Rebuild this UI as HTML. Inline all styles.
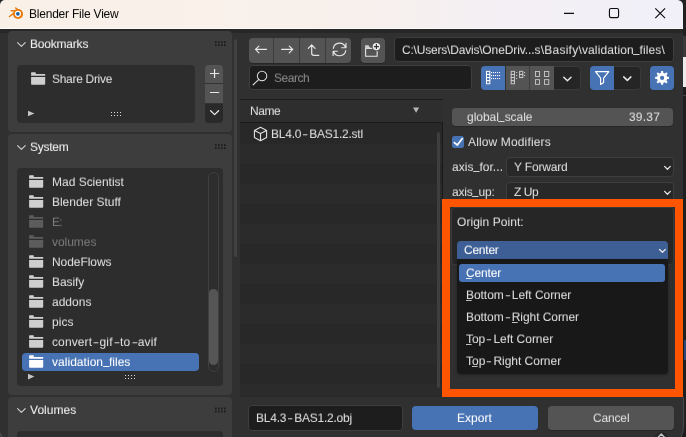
<!DOCTYPE html>
<html>
<head>
<meta charset="utf-8">
<title>Blender File View</title>
<style>
html,body{margin:0;padding:0;}
body{width:686px;height:437px;overflow:hidden;position:relative;background:#212121;font-family:"Liberation Sans",sans-serif;font-size:12px;color:#dfdfdf;}
.abs,.t,.box,.btn,.fld,.panel{position:absolute;}
.t{white-space:nowrap;line-height:14px;height:14px;}
#win{position:absolute;left:0;top:0;width:683px;height:437px;background:#303030;border-radius:5px 5.5px 0 0;overflow:hidden;}
#title{position:absolute;left:0;top:0;width:683px;height:28.8px;background:linear-gradient(90deg,#f9f1e8 0%,#f8f0ea 45%,#f3eff4 75%,#f1f0f8 100%);box-shadow:inset 0 -1px 0 rgba(255,255,255,0.65);}
#tshadow{position:absolute;left:0;top:28.8px;width:683px;height:3.8px;background:#272727;}
.panel{background:#3d3d3d;border-radius:4px;}
.box{background:#2d2d2d;border-radius:4px;}
.btn{background:#545454;border-radius:4px;box-shadow:0 1px 0 rgba(0,0,0,0.18);}
.fld{background:#1d1d1d;border-radius:4px;box-shadow:inset 0 0 0 1px #3e3e3e;}
.hy{display:inline-block;margin:0 2.1px;transform:scaleX(1.45);}
.t{transform:scaleY(0.94);transform-origin:0 11.2px;will-change:transform;-webkit-text-stroke:0.05px currentColor;}
u{text-decoration:none;background:linear-gradient(currentColor,currentColor) 0 calc(100% - 0.9px)/5.7px 0.9px no-repeat;}
.us{display:inline-block;position:relative;top:-2px;transform:scaleX(0.84);margin:0 -0.45px;-webkit-text-stroke:0.35px currentColor;}
.hd{color:#f0f0f0;}
.dis{color:#7a7a7a;}
svg{position:absolute;overflow:visible;}
</style>
</head>
<body>
<div id="win">
  <div id="title"></div>
  <div id="tshadow"></div>
  <!-- title text -->
  <span class="t" id="ttl" style="-webkit-text-stroke:0;color:#000;transform:scaleY(0.985);left:29.4px;top:6.5px;font-size:12px;letter-spacing:-0.216px;">Blender File View</span>

  <!-- sidebar panels -->
  <div class="panel" style="left:8px;top:31px;width:224px;height:101px;"></div>
  <div class="panel" style="left:8px;top:134px;width:224px;height:261px;"></div>
  <div class="panel" style="left:8px;top:397.3px;width:224px;height:60px;"></div>

  <span class="t hd" style="left:30.2px;top:37px;letter-spacing:-0.203px;">Bookmarks</span>
  <span class="t hd" style="left:30.1px;top:139.8px;letter-spacing:-0.253px;">System</span>
  <span class="t hd" style="left:30.2px;top:402.6px;letter-spacing:0.038px;">Volumes</span>

  <!-- bookmarks list -->
  <div class="box" style="left:17px;top:65px;width:178px;height:58px;"></div>
  <span class="t" style="left:52.1px;top:72px;letter-spacing:-0.305px;">Share Drive</span>
  <div class="btn" style="left:205px;top:65px;width:18px;height:18px;border-radius:4px 4px 0 0;"></div>
  <div class="btn" style="left:205px;top:84px;width:18px;height:19px;border-radius:0 0 0 0;"></div>
  <div class="abs" style="left:205px;top:104px;width:18px;height:19px;background:#292929;border-radius:0 0 4px 4px;"></div>

  <!-- system list -->
  <div class="box" style="left:17px;top:168px;width:206px;height:218px;"></div>
  <div class="abs" style="left:22px;top:353px;width:177px;height:18px;background:#4772b3;border-radius:4px;"></div>
  <span class="t" style="left:52.0px;top:175px;letter-spacing:-0.010px;">Mad Scientist</span>
  <span class="t" style="left:52.0px;top:195px;letter-spacing:-0.029px;">Blender Stuff</span>
  <span class="t dis" style="left:52.0px;top:215px;letter-spacing:-0.872px;">E:</span>
  <span class="t dis" style="left:52.0px;top:235px;letter-spacing:-0.041px;">volumes</span>
  <span class="t" style="left:52.0px;top:255px;letter-spacing:-0.059px;">NodeFlows</span>
  <span class="t" style="left:52.0px;top:275px;letter-spacing:-0.098px;">Basify</span>
  <span class="t" style="left:52.0px;top:295px;letter-spacing:0.004px;">addons</span>
  <span class="t" style="left:52.0px;top:315px;letter-spacing:0.039px;">pics</span>
  <span class="t" style="left:52.0px;top:335px;letter-spacing:0.107px;">convert<span class="hy" style="margin:0 1.2px 0 2.2px;transform:scaleX(1.6)">-</span>gif<span class="hy" style="margin:0 1.2px 0 2.2px;transform:scaleX(1.6)">-</span>to<span class="hy" style="margin:0 1.2px 0 2.2px;transform:scaleX(1.6)">-</span>avif</span>
  <span class="t" style="left:52.0px;top:355px;color:#fff;letter-spacing:0.034px;">validation<span class="us">_</span>files</span>
  <!-- scrollbar -->
  <div class="abs" style="left:207.6px;top:172px;width:9px;height:198px;border:1px solid #404040;border-radius:5.5px;background:#2d2d2d;"></div>
  <div class="abs" style="left:208.6px;top:288.5px;width:9.4px;height:76.5px;border-radius:4.7px;background:#555;"></div>
  <div class="box" style="left:17px;top:431px;width:206px;height:20px;"></div>

  <!-- region scrollbar -->
  <div class="abs" style="left:234.3px;top:38.5px;width:2.5px;height:218px;background:#414141;border-radius:1.5px;"></div>

  <!-- toolbar -->
  <div class="btn" style="left:248.7px;top:38px;width:102.4px;height:24.8px;"></div>
  <div class="abs" style="left:273px;top:38px;width:1.1px;height:24.8px;background:#3d3d3d;"></div>
  <div class="abs" style="left:299px;top:38px;width:1.1px;height:24.8px;background:#3d3d3d;"></div>
  <div class="abs" style="left:325.2px;top:38px;width:1.1px;height:24.8px;background:#3d3d3d;"></div>
  <div class="btn" style="left:360.8px;top:38px;width:24.6px;height:24.8px;"></div>
  <div class="fld" style="left:393.7px;top:37.4px;width:280.8px;height:24.7px;"></div>
  <span class="t" style="left:401.8px;top:43px;letter-spacing:0.012px;"><span style="letter-spacing:-0.2px">C:\Users\Davis\</span><span style="letter-spacing:-0.1px">OneDriv...</span><span style="letter-spacing:0.24px">s\Basify\</span><span style="letter-spacing:0.1px">validation<span class="us">_</span>files\</span></span>

  <div class="fld" style="left:248.7px;top:65.4px;width:223.2px;height:24.8px;"></div>
  <span class="t" style="left:273.9px;top:71px;color:#8a8a8a;letter-spacing:-0.455px;">Search</span>

  <div class="abs" style="left:480.8px;top:66px;width:24.4px;height:24px;background:#4772b3;border-radius:4px 0 0 4px;"></div>
  <div class="abs" style="left:505.9px;top:66px;width:48.3px;height:24px;background:#545454;"></div>
  <div class="abs" style="left:529.3px;top:66px;width:0.9px;height:24px;background:#3d3d3d;"></div>
  <div class="abs" style="left:554.2px;top:65.6px;width:25.5px;height:22.6px;background:#252525;border-radius:0 4.5px 4.5px 0;border:1px solid #393939;border-left:none;"></div>
  <div class="abs" style="left:590px;top:66px;width:24px;height:24px;background:#4772b3;border-radius:4px 0 0 4px;"></div>
  <div class="abs" style="left:614.2px;top:65.6px;width:25.8px;height:22.6px;background:#252525;border-radius:0 4.5px 4.5px 0;border:1px solid #393939;border-left:none;"></div>
  <div class="abs" style="left:650px;top:66px;width:24px;height:24px;background:#4772b3;border-radius:4px;"></div>

  <!-- file list -->
  <div class="abs" style="left:240px;top:98.5px;width:203px;height:298px;background:#282828;"></div>
  <div class="abs" style="left:240px;top:98.5px;width:203px;height:1px;background:#1c1c1c;"></div>
  <div class="abs" style="left:240px;top:99.5px;width:203px;height:22.5px;background:#2e2e2e;"></div>
  <div class="abs" style="left:240px;top:143.8px;width:203px;height:252.7px;background:repeating-linear-gradient(180deg,#2b2b2b 0,#2b2b2b 20px,#282828 20px,#282828 40px);"></div>
  <div class="abs" style="left:240px;top:121.7px;width:203px;height:1px;background:#191919;"></div>
  <div class="abs" style="left:442.2px;top:122px;width:1px;height:274.5px;background:#191919;"></div>
  <span class="t" style="left:249.8px;top:104px;letter-spacing:-0.429px;">Name</span>
  <span class="t" style="left:271.2px;top:127px;letter-spacing:-0.236px;">BL4.0<span class="hy">-</span>BAS1.2.stl</span>
  <div class="abs" style="left:437.3px;top:131.5px;width:2.5px;height:256px;background:#3e3e3e;border-radius:1.5px;"></div>

  <!-- bottom -->
  <div class="fld" style="left:248px;top:404.9px;width:155px;height:25.7px;"></div>
  <span class="t" style="left:255.9px;top:411px;letter-spacing:-0.237px;">BL4.3<span class="hy">-</span>BAS1.2.obj</span>
  <div class="abs" style="left:412px;top:406px;width:126px;height:24px;background:#4772b3;border-radius:4px;"></div>
  <span class="t" style="left:456.8px;top:411px;color:#fff;letter-spacing:0.052px;">Export</span>
  <div class="btn" style="left:548px;top:406px;width:126.2px;height:24.2px;"></div>
  <span class="t" style="left:593.1px;top:411px;letter-spacing:-0.160px;">Cancel</span>

  <!-- options -->
  <div class="btn" style="left:451.6px;top:107.8px;width:221.8px;height:18.5px;"></div>
  <span class="t" style="left:466.7px;top:110px;letter-spacing:-0.030px;">global<span class="us">_</span>scale</span>
  <span class="t" style="left:628.8px;top:110px;letter-spacing:0.194px;">39.37</span>
  <div class="abs" style="left:452px;top:136px;width:12px;height:12px;background:#4772b3;border-radius:2.5px;"></div>
  <span class="t" style="left:468.0px;top:135px;letter-spacing:0.140px;">Allow Modifiers</span>
  <span class="t" style="left:451.7px;top:160px;letter-spacing:0.045px;">axis<span class="us">_</span>for...</span>
  <div class="fld" style="left:505.6px;top:156.8px;width:168.3px;height:20.4px;background:#282828;"></div>
  <span class="t" style="left:514.1px;top:160px;letter-spacing:-0.182px;">Y Forward</span>
  <span class="t" style="left:451.7px;top:185px;letter-spacing:-0.155px;">axis<span class="us">_</span>up:</span>
  <div class="fld" style="left:505.6px;top:181.9px;width:168.3px;height:20.4px;background:#282828;"></div>
  <span class="t" style="left:514.1px;top:185px;letter-spacing:-0.429px;">Z Up</span>

  <!-- orange highlight -->
  <div class="abs" style="left:450.5px;top:207px;width:224.5px;height:182px;background:#303030;"></div>
  <div class="abs" style="left:450.5px;top:207.2px;width:223.3px;height:57.4px;background:#262626;border-radius:4px;box-shadow:inset 0 0 0 1px #3a3a3a;"></div>
  <span class="t" style="left:456.8px;top:215px;letter-spacing:0.051px;">Origin Point:</span>
  <div class="abs" style="left:457px;top:241px;width:211px;height:18.3px;background:#3d5f95;border-radius:4px 4px 0 0;"></div>
  <span class="t" style="left:464.1px;top:243px;color:#fff;letter-spacing:-0.239px;">Center</span>
  <div class="abs" style="left:456.6px;top:259.3px;width:211.4px;height:115px;background:#181818;border-radius:0 0 4px 4px;box-shadow:0 1px 3px rgba(0,0,0,0.35);"></div>
  <div class="abs" style="left:459px;top:264px;width:206px;height:18px;background:#4772b3;border-radius:3px;"></div>
  <span class="t" style="left:465.9px;top:266px;color:#fff;letter-spacing:-0.172px;"><u>C</u>enter</span>
  <span class="t" style="left:465.9px;top:288px;letter-spacing:-0.053px;"><u>B</u>ottom<span class="hy">-</span>Left Corner</span>
  <span class="t" style="left:465.9px;top:310px;letter-spacing:-0.066px;">Bottom<span class="hy">-</span><u>R</u>ight Corner</span>
  <span class="t" style="left:465.9px;top:332px;letter-spacing:-0.032px;"><u>T</u>op<span class="hy">-</span>Left Corner</span>
  <span class="t" style="left:465.9px;top:354px;letter-spacing:-0.031px;">T<u>o</u>p<span class="hy">-</span>Right Corner</span>
  <div class="abs" style="left:442.3px;top:199px;width:224.5px;height:182px;border:8px solid #ff5500;width:224.5px;"></div>
<svg id="icons" width="686" height="437" viewBox="0 0 686 437" style="left:0;top:0;pointer-events:none;"><path fill="#cfcfcf" d="M29.1 175.65q0-.4 .4-.4h3.9q.4 0 .4 .4v1.25h9q.4 0 .4 .4v1.5h-14.1z"/><path fill="#cfcfcf" d="M29.1 179.90h14.1v7.1q0 .8-.8 .8h-12.5q-.8 0-.8-.8z"/>
<path fill="#cfcfcf" d="M29.1 195.65q0-.4 .4-.4h3.9q.4 0 .4 .4v1.25h9q.4 0 .4 .4v1.5h-14.1z"/><path fill="#cfcfcf" d="M29.1 199.90h14.1v7.1q0 .8-.8 .8h-12.5q-.8 0-.8-.8z"/>
<path fill="#5c5c5c" d="M29.1 215.65q0-.4 .4-.4h3.9q.4 0 .4 .4v1.25h9q.4 0 .4 .4v1.5h-14.1z"/><path fill="#5c5c5c" d="M29.1 219.90h14.1v7.1q0 .8-.8 .8h-12.5q-.8 0-.8-.8z"/>
<path fill="#5c5c5c" d="M29.1 235.65q0-.4 .4-.4h3.9q.4 0 .4 .4v1.25h9q.4 0 .4 .4v1.5h-14.1z"/><path fill="#5c5c5c" d="M29.1 239.90h14.1v7.1q0 .8-.8 .8h-12.5q-.8 0-.8-.8z"/>
<path fill="#cfcfcf" d="M29.1 255.65q0-.4 .4-.4h3.9q.4 0 .4 .4v1.25h9q.4 0 .4 .4v1.5h-14.1z"/><path fill="#cfcfcf" d="M29.1 259.90h14.1v7.1q0 .8-.8 .8h-12.5q-.8 0-.8-.8z"/>
<path fill="#cfcfcf" d="M29.1 275.65q0-.4 .4-.4h3.9q.4 0 .4 .4v1.25h9q.4 0 .4 .4v1.5h-14.1z"/><path fill="#cfcfcf" d="M29.1 279.90h14.1v7.1q0 .8-.8 .8h-12.5q-.8 0-.8-.8z"/>
<path fill="#cfcfcf" d="M29.1 295.65q0-.4 .4-.4h3.9q.4 0 .4 .4v1.25h9q.4 0 .4 .4v1.5h-14.1z"/><path fill="#cfcfcf" d="M29.1 299.90h14.1v7.1q0 .8-.8 .8h-12.5q-.8 0-.8-.8z"/>
<path fill="#cfcfcf" d="M29.1 315.65q0-.4 .4-.4h3.9q.4 0 .4 .4v1.25h9q.4 0 .4 .4v1.5h-14.1z"/><path fill="#cfcfcf" d="M29.1 319.90h14.1v7.1q0 .8-.8 .8h-12.5q-.8 0-.8-.8z"/>
<path fill="#cfcfcf" d="M29.1 335.65q0-.4 .4-.4h3.9q.4 0 .4 .4v1.25h9q.4 0 .4 .4v1.5h-14.1z"/><path fill="#cfcfcf" d="M29.1 339.90h14.1v7.1q0 .8-.8 .8h-12.5q-.8 0-.8-.8z"/>
<path fill="#ffffff" d="M29.1 355.65q0-.4 .4-.4h3.9q.4 0 .4 .4v1.25h9q.4 0 .4 .4v1.5h-14.1z"/><path fill="#ffffff" d="M29.1 359.90h14.1v7.1q0 .8-.8 .8h-12.5q-.8 0-.8-.8z"/>
<path fill="#cfcfcf" d="M31.1 72.65q0-.4 .4-.4h3.9q.4 0 .4 .4v1.25h9q.4 0 .4 .4v1.5h-14.1z"/><path fill="#cfcfcf" d="M31.1 76.90h14.1v7.1q0 .8-.8 .8h-12.5q-.8 0-.8-.8z"/>
<path fill="none" stroke="#d4d4d4" stroke-width="1.1" stroke-linecap="round" stroke-linejoin="round" d="M17.6 42.60L21.4 46.30L25.2 42.60"/>
<path fill="none" stroke="#d4d4d4" stroke-width="1.1" stroke-linecap="round" stroke-linejoin="round" d="M17.6 145.60L21.4 149.30L25.2 145.60"/>
<path fill="none" stroke="#d4d4d4" stroke-width="1.1" stroke-linecap="round" stroke-linejoin="round" d="M17.6 408.60L21.4 412.30L25.2 408.60"/>
<rect x="215.0" y="41.2" width="1.6" height="1.8" fill="#1b1b1b"/><rect x="218.0" y="41.2" width="1.6" height="1.8" fill="#1b1b1b"/><rect x="221.0" y="41.2" width="1.6" height="1.8" fill="#1b1b1b"/><rect x="224.0" y="41.2" width="1.6" height="1.8" fill="#1b1b1b"/><rect x="215.0" y="44.2" width="1.6" height="1.8" fill="#1b1b1b"/><rect x="218.0" y="44.2" width="1.6" height="1.8" fill="#1b1b1b"/><rect x="221.0" y="44.2" width="1.6" height="1.8" fill="#1b1b1b"/><rect x="224.0" y="44.2" width="1.6" height="1.8" fill="#1b1b1b"/>
<rect x="215.0" y="144.2" width="1.6" height="1.8" fill="#1b1b1b"/><rect x="218.0" y="144.2" width="1.6" height="1.8" fill="#1b1b1b"/><rect x="221.0" y="144.2" width="1.6" height="1.8" fill="#1b1b1b"/><rect x="224.0" y="144.2" width="1.6" height="1.8" fill="#1b1b1b"/><rect x="215.0" y="147.2" width="1.6" height="1.8" fill="#1b1b1b"/><rect x="218.0" y="147.2" width="1.6" height="1.8" fill="#1b1b1b"/><rect x="221.0" y="147.2" width="1.6" height="1.8" fill="#1b1b1b"/><rect x="224.0" y="147.2" width="1.6" height="1.8" fill="#1b1b1b"/>
<rect x="215.0" y="407.6" width="1.6" height="1.8" fill="#1b1b1b"/><rect x="218.0" y="407.6" width="1.6" height="1.8" fill="#1b1b1b"/><rect x="221.0" y="407.6" width="1.6" height="1.8" fill="#1b1b1b"/><rect x="224.0" y="407.6" width="1.6" height="1.8" fill="#1b1b1b"/><rect x="215.0" y="410.6" width="1.6" height="1.8" fill="#1b1b1b"/><rect x="218.0" y="410.6" width="1.6" height="1.8" fill="#1b1b1b"/><rect x="221.0" y="410.6" width="1.6" height="1.8" fill="#1b1b1b"/><rect x="224.0" y="410.6" width="1.6" height="1.8" fill="#1b1b1b"/>
<path fill="#c4c4c4" d="M28 110.7L34.4 113.5L28 116.3z"/>
<rect x="111.00" y="112.00" width="1.0" height="1.0" fill="#dedede"/><rect x="114.00" y="112.00" width="1.0" height="1.0" fill="#dedede"/><rect x="117.00" y="112.00" width="1.0" height="1.0" fill="#dedede"/><rect x="120.00" y="112.00" width="1.0" height="1.0" fill="#dedede"/><rect x="111.00" y="115.00" width="1.0" height="1.0" fill="#dedede"/><rect x="114.00" y="115.00" width="1.0" height="1.0" fill="#dedede"/><rect x="117.00" y="115.00" width="1.0" height="1.0" fill="#dedede"/><rect x="120.00" y="115.00" width="1.0" height="1.0" fill="#dedede"/>
<path fill="#c4c4c4" d="M28 373.8L34.4 376.6L28 379.4z"/>
<rect x="125.00" y="375.00" width="1.0" height="1.0" fill="#dedede"/><rect x="128.00" y="375.00" width="1.0" height="1.0" fill="#dedede"/><rect x="131.00" y="375.00" width="1.0" height="1.0" fill="#dedede"/><rect x="134.00" y="375.00" width="1.0" height="1.0" fill="#dedede"/><rect x="125.00" y="378.00" width="1.0" height="1.0" fill="#dedede"/><rect x="128.00" y="378.00" width="1.0" height="1.0" fill="#dedede"/><rect x="131.00" y="378.00" width="1.0" height="1.0" fill="#dedede"/><rect x="134.00" y="378.00" width="1.0" height="1.0" fill="#dedede"/>
<path stroke="#e6e6e6" stroke-width="1.2" fill="none" d="M210 73.5h9.2M214.55 69v9.1"/>
<path stroke="#e6e6e6" stroke-width="1.2" fill="none" d="M210 92.5h9.2"/>
<path fill="none" stroke="#e6e6e6" stroke-width="1.3" stroke-linecap="round" stroke-linejoin="round" d="M210.6 110.7L214.6 114.6L218.6 110.7"/>
<path stroke="#e6e6e6" stroke-width="1.2" fill="none" stroke-linecap="round" stroke-linejoin="round" d="M266.5 49.45H255.5M258.9 46.05L255.5 49.45L258.9 52.85"/>
<path stroke="#e6e6e6" stroke-width="1.2" fill="none" stroke-linecap="round" stroke-linejoin="round" d="M281.7 49.45H292.7M289.3 46.05L292.7 49.45L289.3 52.85"/>
<path stroke="#e6e6e6" stroke-width="1.2" fill="none" stroke-linecap="round" stroke-linejoin="round" d="M318.8 55.3H313.7Q311.7 55.3 311.7 53.3V44.9M308.3 48.4L311.7 44.9L315.1 48.4"/>
<path stroke="#e6e6e6" stroke-width="1.15" fill="none" stroke-linecap="round" stroke-linejoin="round" d="M333.35 48.3A6.3 6.3 0 0 1 345.5 47.4M346 43.4V47.7H341.7M345.75 50.6A6.3 6.3 0 0 1 333.6 51.5M333.1 55.5V51.2H337.4"/>
<path stroke="#e6e6e6" stroke-width="1.1" fill="none" stroke-linejoin="round" d="M365.6 48.4H377.15V56.3H365.6z"/>
<path fill="#cdcdcd" d="M365.05 45.3h3.5l2 3.2h-5.5z"/>
<circle cx="376.4" cy="46.6" r="4.7" fill="#545454"/><circle cx="376.4" cy="46.6" r="3.7" fill="#f0f0f0"/><path stroke="#333333" stroke-width="1.2" d="M373.9 46.6h5M376.4 44.1v5"/>
<circle cx="262.05" cy="75.95" r="4.7" fill="none" stroke="#d0d0d0" stroke-width="1.1"/><path stroke="#d0d0d0" stroke-width="1.2" stroke-linecap="round" d="M258.7 79.5L253.2 84.8"/>
<rect x="486.50" y="71.35" width="3.3" height="3.1" fill="none" stroke="#ffffff" stroke-width="1.0"/><rect x="486.50" y="74.45" width="3.3" height="3.1" fill="none" stroke="#ffffff" stroke-width="1.0"/><rect x="486.50" y="77.55" width="3.3" height="3.1" fill="none" stroke="#ffffff" stroke-width="1.0"/><rect x="486.50" y="80.65" width="3.3" height="3.1" fill="none" stroke="#ffffff" stroke-width="1.0"/><rect x="491.0" y="72" width="1.1" height="1.1" fill="#ffffff"/><rect x="493.0" y="72" width="1.1" height="1.1" fill="#ffffff"/><rect x="495.0" y="72" width="1.1" height="1.1" fill="#ffffff"/><rect x="497.0" y="72" width="1.1" height="1.1" fill="#ffffff"/><rect x="499.0" y="72" width="1.1" height="1.1" fill="#ffffff"/><rect x="491.0" y="75" width="1.1" height="1.1" fill="#ffffff"/><rect x="493.0" y="75" width="1.1" height="1.1" fill="#ffffff"/><rect x="495.0" y="75" width="1.1" height="1.1" fill="#ffffff"/><rect x="497.0" y="75" width="1.1" height="1.1" fill="#ffffff"/><rect x="499.0" y="75" width="1.1" height="1.1" fill="#ffffff"/><rect x="491.0" y="78" width="1.1" height="1.1" fill="#ffffff"/><rect x="493.0" y="78" width="1.1" height="1.1" fill="#ffffff"/><rect x="495.0" y="78" width="1.1" height="1.1" fill="#ffffff"/><rect x="497.0" y="78" width="1.1" height="1.1" fill="#ffffff"/><rect x="499.0" y="78" width="1.1" height="1.1" fill="#ffffff"/>
<rect x="511.20" y="71.35" width="3.3" height="3.1" fill="none" stroke="#c6c6c6" stroke-width="1.0"/><rect x="511.20" y="74.45" width="3.3" height="3.1" fill="none" stroke="#c6c6c6" stroke-width="1.0"/><rect x="511.20" y="77.55" width="3.3" height="3.1" fill="none" stroke="#c6c6c6" stroke-width="1.0"/><rect x="511.20" y="80.65" width="3.3" height="3.1" fill="none" stroke="#c6c6c6" stroke-width="1.0"/><rect x="519.60" y="71.35" width="3.2" height="3.1" fill="none" stroke="#c6c6c6" stroke-width="1.0"/><rect x="519.60" y="74.45" width="3.2" height="3.1" fill="none" stroke="#c6c6c6" stroke-width="1.0"/><rect x="516.1" y="72" width="1.1" height="1.1" fill="#c6c6c6"/><rect x="516.1" y="75" width="1.1" height="1.1" fill="#c6c6c6"/><rect x="516.1" y="78" width="1.1" height="1.1" fill="#c6c6c6"/><rect x="524.0" y="72" width="1.1" height="1.1" fill="#c6c6c6"/><rect x="524.0" y="75" width="1.1" height="1.1" fill="#c6c6c6"/>
<rect x="535.45" y="71.45" width="4.0" height="5.0" fill="none" stroke="#cacaca" stroke-width="0.9"/><rect x="535.45" y="79.65" width="4.0" height="4.7" fill="none" stroke="#cacaca" stroke-width="0.9"/><rect x="544.45" y="71.45" width="4.3" height="5.0" fill="none" stroke="#cacaca" stroke-width="0.9"/><rect x="544.45" y="79.65" width="4.3" height="4.7" fill="none" stroke="#cacaca" stroke-width="0.9"/>
<path fill="none" stroke="#e6e6e6" stroke-width="1.5" stroke-linecap="round" stroke-linejoin="round" d="M563.8 77.3L567.4 80.8L571 77.3"/>
<path fill="none" stroke="#ffffff" stroke-width="1.2" stroke-linejoin="round" d="M595.6 71.6H608.8L603.6 78.2V82.6L600.6 84.4V78.2z"/>
<path fill="none" stroke="#e6e6e6" stroke-width="1.5" stroke-linecap="round" stroke-linejoin="round" d="M623.7 76.9L627.3 80.4L630.9 76.9"/>
<path fill="#ffffff" fill-rule="evenodd" d="M661.05 70.98L663.15 70.98L663.18 72.81L664.93 73.54L666.25 72.27L667.73 73.75L666.46 75.07L667.19 76.82L669.02 76.85L669.02 78.95L667.19 78.98L666.46 80.73L667.73 82.05L666.25 83.53L664.93 82.26L663.18 82.99L663.15 84.82L661.05 84.82L661.02 82.99L659.27 82.26L657.95 83.53L656.47 82.05L657.74 80.73L657.01 78.98L655.18 78.95L655.18 76.85L657.01 76.82L657.74 75.07L656.47 73.75L657.95 72.27L659.27 73.54L661.02 72.81zM664.15 77.9a2.05 2.05 0 1 0 -4.1 0a2.05 2.05 0 1 0 4.1 0z"/>
<path fill="#b6b6b6" d="M413 107.4h6.2l-3.1 5.4z"/>
<path fill="none" stroke="#e0e0e0" stroke-width="1.1" stroke-linejoin="round" d="M260.5 127.3L266.6 130.6V137.5L260.5 140.7L254.4 137.5V130.6zM254.4 130.6L260.5 133.6L266.6 130.6M260.5 133.6V140.7"/>
<path fill="none" stroke="#ffffff" stroke-width="1.7" stroke-linecap="round" stroke-linejoin="round" d="M454.3 142.6L457.4 145L462.3 138.6"/>
<path fill="none" stroke="#e6e6e6" stroke-width="1.3" stroke-linecap="round" stroke-linejoin="round" d="M664.6 166.4L667.45 169.2L670.3 166.4"/>
<path fill="none" stroke="#e6e6e6" stroke-width="1.3" stroke-linecap="round" stroke-linejoin="round" d="M664.6 191.4L667.45 194.2L670.3 191.4"/>
<path fill="none" stroke="#e6e6e6" stroke-width="1.3" stroke-linecap="round" stroke-linejoin="round" d="M659.6 249.5L662.45 252.3L665.3 249.5"/>
<path stroke="#0c0c0c" stroke-width="1.15" fill="none" d="M564 13.4h10"/>
<rect x="609.45" y="8.45" width="9.1" height="9.2" rx="1.6" fill="none" stroke="#0c0c0c" stroke-width="1.15"/>
<path stroke="#0c0c0c" stroke-width="1.15" fill="none" d="M655.3 8.3l9.8 9.8M665.1 8.3l-9.8 9.8"/>
<g><g stroke="#e87a0c" stroke-width="1.55" stroke-linecap="round" fill="none"><path d="M9.5 16.5L15.2 12.2"/><path d="M11.3 10.65H16.8"/><path d="M15.7 8L19.2 10.6"/></g><circle cx="18" cy="14" r="5.05" fill="#e87a0c"/><circle cx="17.9" cy="13.85" r="3.1" fill="#ffffff"/><circle cx="17.9" cy="13.85" r="1.85" fill="#1d5ea8"/></g></svg>
<!-- endicons -->
</div>
<div class="abs" style="left:683px;top:0;width:3px;height:36px;background:#212121;"></div>
<div class="abs" style="left:683px;top:36px;width:3px;height:21px;background:#3a3a3a;"></div>
<div class="abs" style="left:683px;top:57px;width:3px;height:29.5px;background:#ececec;"></div>
<div class="abs" style="left:683px;top:86.5px;width:3px;height:351px;background:#1f1f1f;"></div>
<div class="abs" style="left:683px;top:95px;width:3px;height:1px;background:#444;"></div>
<div class="abs" style="left:683.5px;top:340px;width:2.5px;height:19.6px;background:#2c4878;"></div>
<svg width="686" height="437" viewBox="0 0 686 437" style="left:0;top:0;">
<path fill="#1d1d1d" d="M683 424Q683.6 432 680.5 437H686V424z"/>
<path fill="none" stroke="#474747" stroke-width="1.2" d="M683.5 397V426Q683.5 432.5 680.8 437.5"/>
<path fill="none" stroke="#5c5c5c" stroke-width="1" d="M-0.3 432.8Q1.4 434.6 1.6 437.5"/>
<circle cx="661.3" cy="439.2" r="7.2" fill="#272727"/>
<path fill="none" stroke="#c4c4c4" stroke-width="1.4" stroke-linecap="round" stroke-linejoin="round" d="M658 437.4L661.3 434.1L664.6 437.4"/>
</svg>
</body>
</html>
